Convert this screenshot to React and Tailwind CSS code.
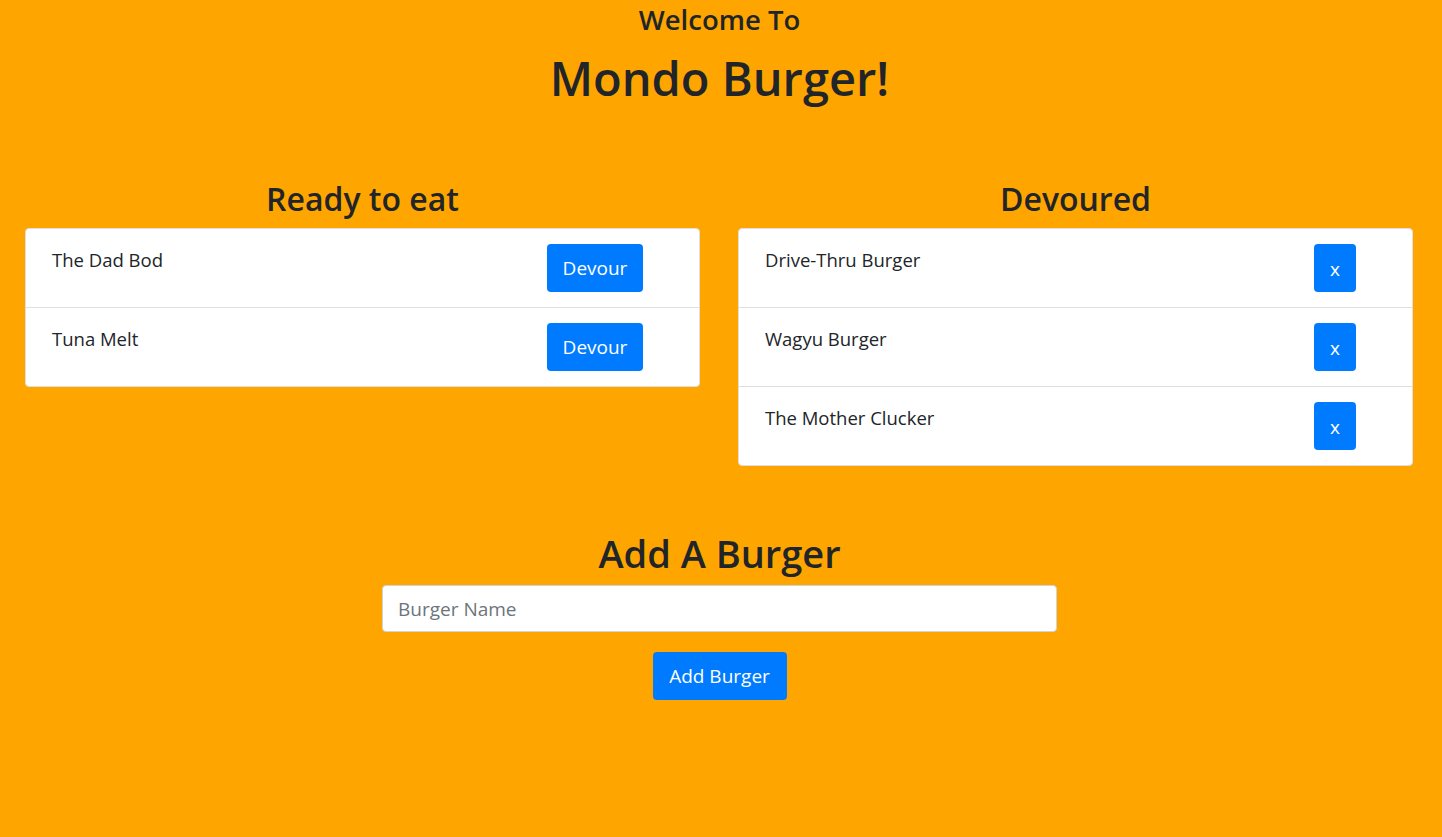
export default function App() {
  const ready = ["The Dad Bod", "Tuna Melt"];
  const devoured = ["Drive-Thru Burger", "Wagyu Burger", "The Mother Clucker"];

  return (
    <div className="min-h-screen bg-[#ffa500] text-[#212529] font-['Open_Sans',sans-serif]">
      {/* header */}
      <div className="text-center pr-[3px]">
        <h3 className="text-[27.5px] leading-[40px] font-semibold">Welcome To</h3>
        <h1 className="mt-[10px] text-[47px] leading-[56px] font-semibold">Mondo Burger!</h1>
      </div>

      {/* lists */}
      <div className="mt-[73px] grid grid-cols-2 gap-[38px] pl-[25px] pr-[29px] items-start">
        <div>
          <h2 className="text-center text-[32px] leading-[40px] font-semibold mb-[9px]">Ready to eat</h2>
          <div className="bg-white border border-[#dfdfdf] rounded-[4px]">
            {ready.map((name, i) => (
              <div
                key={name}
                className={
                  "flex items-start justify-between pl-[26px] pr-[56px] py-[15px] " +
                  (i > 0 ? "border-t border-[#dfdfdf]" : "")
                }
              >
                <span className="text-[18.5px] leading-[27px] mt-[2px]">{name}</span>
                <button className="w-[96px] h-[48px] bg-[#007bff] text-white text-[19px] rounded-[4px]">
                  Devour
                </button>
              </div>
            ))}
          </div>
        </div>

        <div>
          <h2 className="text-center text-[32px] leading-[40px] font-semibold mb-[9px]">Devoured</h2>
          <div className="bg-white border border-[#dfdfdf] rounded-[4px]">
            {devoured.map((name, i) => (
              <div
                key={name}
                className={
                  "flex items-start justify-between pl-[26px] pr-[56px] py-[15px] " +
                  (i > 0 ? "border-t border-[#dfdfdf]" : "")
                }
              >
                <span className="text-[18.5px] leading-[27px] mt-[2px]">{name}</span>
                <button className="w-[42px] h-[48px] bg-[#007bff] text-white text-[19px] rounded-[4px] pt-[3px]">
                  x
                </button>
              </div>
            ))}
          </div>
        </div>
      </div>

      {/* add form */}
      <div className="mt-[63px] flex flex-col items-center pr-[3px] pb-[40px]">
        <h2 className="text-[38px] leading-[48px] font-semibold mb-[8px]">Add A Burger</h2>
        <input
          type="text"
          placeholder="Burger Name"
          className="w-[675px] h-[47px] bg-white border border-[#ced4da] rounded-[4px] px-[15px] text-[19px] placeholder:text-[#6c757d] outline-none"
        />
        <button className="mt-[20px] w-[134px] h-[48px] bg-[#007bff] text-white text-[19px] rounded-[4px]">
          Add Burger
        </button>
      </div>
    </div>
  );
}
